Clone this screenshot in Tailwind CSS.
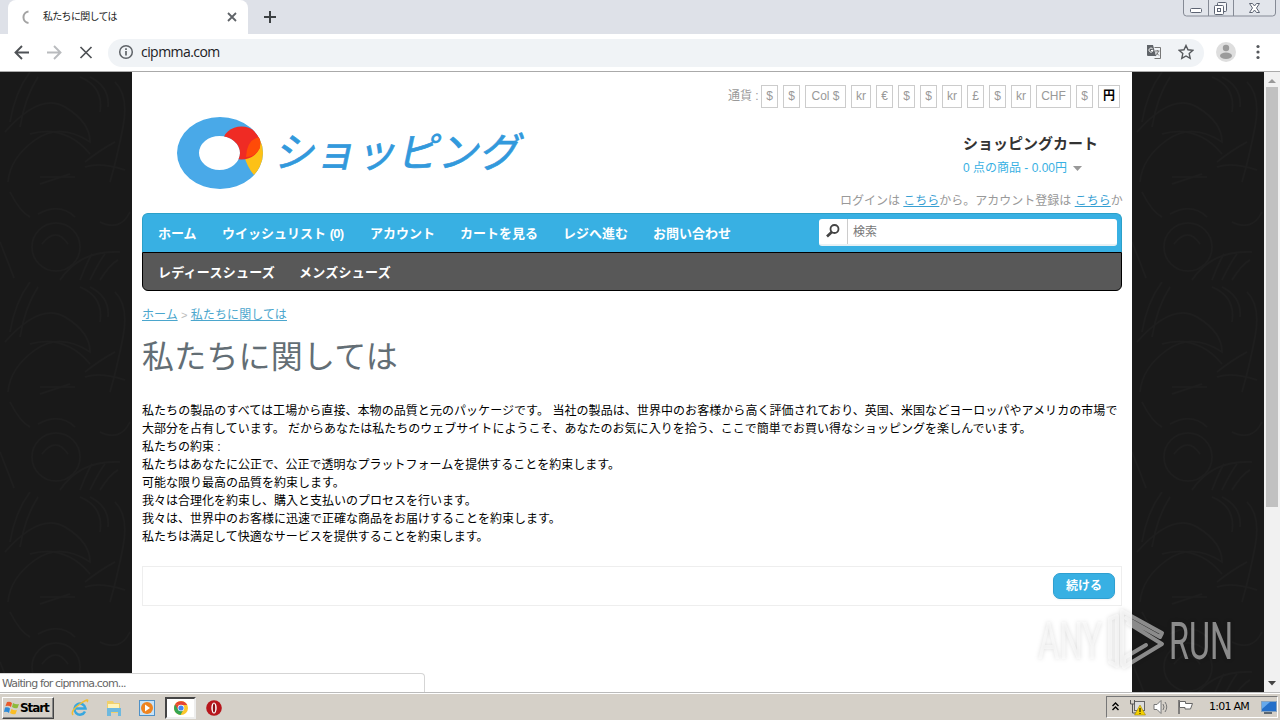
<!DOCTYPE html>
<html lang="ja">
<head>
  <meta charset="UTF-8" />
  <meta name="viewport" content="width=device-width, initial-scale=1.0"/>
  <title>私たちに関しては</title>
  <script src="https://cdn.jsdelivr.net/npm/@tailwindcss/browser@4"></script>
</head>
<body class="relative w-[1280px] h-[720px] overflow-hidden flex flex-col bg-white text-xs whitespace-nowrap font-['Liberation_Sans','Noto_Sans_CJK_JP',sans-serif]">

  <!-- Tab strip -->
  <div class="h-[34px] shrink-0 bg-[#dee1e8] flex justify-between">
    <div class="flex pl-2">
      <div class="w-60 h-[34px] bg-white rounded-t-lg flex items-center pl-[11px] pr-[10px]">
        <svg class="w-4 h-4 mr-2" viewBox="0 0 16 16" fill="none" stroke="#a3a3a3" stroke-width="2"><path d="M9.500 2.500A5.800 5.800 0 0 0 9.500 14"/></svg>
        <span class="text-[10px] w-[75px] text-[#222] tracking-[-0.7px]">私たちに関しては</span>
        <svg class="w-3 h-3 ml-auto" viewBox="0 0 12 12" stroke="#5f6368" stroke-width="1.8"><path d="M2 2l8 8M10 2l-8 8"/></svg>
      </div>
      <svg class="w-3 h-3 ml-4 mt-[11px]" viewBox="0 0 12 12" stroke="#3c4043" stroke-width="2"><path d="M6 0v12M0 6h12"/></svg>
    </div>
    <!-- Window buttons -->
    <svg class="w-24 h-[18px] mr-[1px]" viewBox="0 0 96 18" fill="none" stroke="#858a95">
      <path d="M.5 0v13q0 3 3 3h86q3 0 3-3V0M25.500 0v16M50.500 0v16" fill="#e2e5eb"/>
      <g stroke="#5d6473">
        <rect x="7.500" y="8.500" width="11" height="4" rx="1" fill="#fff"/>
        <rect x="34.500" y="2.500" width="9" height="9" rx="1" fill="#f5f6f8"/>
        <rect x="31.500" y="5.500" width="9" height="9" rx="1" fill="#fff"/>
        <rect x="34.500" y="8.500" width="3" height="3"/>
        <path d="M66.500 3.500h3l2 2.500 2-2.500h3l-3 4.500 3 4.500h-3l-2-2.500-2 2.500h-3l3-4.500z" fill="#fff"/>
      </g>
    </svg>
  </div>

  <!-- Toolbar -->
  <div class="h-[38px] shrink-0 bg-white border-b border-[#aaa] flex items-center pl-[14px] pr-[14px]">
    <svg class="w-4 h-4 mr-4" viewBox="0 0 16 16" fill="none" stroke="#4f5256" stroke-width="1.900"><path d="M15 7.500H2M8 1L1.500 7.500 8 14"/></svg>
    <svg class="w-4 h-4 mr-4" viewBox="0 0 16 16" fill="none" stroke="#b9bbbe" stroke-width="1.900"><path d="M1 7.500h13M8 1L14.500 7.500 8 14"/></svg>
    <svg class="w-4 h-4 mr-[14px]" viewBox="0 0 16 16" stroke="#4f5256" stroke-width="1.700"><path d="M2.500 2l11 11M13.500 2l-11 11"/></svg>
    <div class="w-[1096px] h-7 rounded-full bg-[#f0f3f6] flex items-center px-[10px]">
      <svg class="w-4 h-4 mr-[7px] -mt-px" viewBox="0 0 16 16" fill="none" stroke="#5f6368" stroke-width="1.500"><circle cx="8" cy="8" r="6.300"/><path d="M8 7v4.500M8 4.300v1.700" stroke-width="1.700"/></svg>
      <span class="text-sm text-[#202124] font-['Open_Sans',sans-serif] w-[79px] tracking-[-0.56px] -mt-px">cipmma.com</span>
      <svg class="w-4 h-4 ml-auto mr-4 -mt-[2px]" viewBox="0 0 16 16" fill="none">
        <path d="M8.500 3.500h6v11h-6" stroke="#777"/><path d="M9 7h4.500M11.300 6v1M12.500 7q-1 4-3.500 5M10 8.500l3 3" stroke="#777"/>
        <path d="M1 1h6l3 11H2q-1 0-1-1z" fill="#5f6368"/><path d="M6.700 5A2 2 0 1 0 7 6.500H5" stroke="#fff"/>
      </svg>
      <svg class="w-4 h-4 -mt-[2px]" viewBox="0 0 16 16" fill="none" stroke="#55585c" stroke-width="1.400"><path d="M8 1.500l2 4.300 4.700.6-3.500 3.200 1 4.700L8 12l-4.200 2.300 1-4.700L1.300 6.400 6 5.800z"/></svg>
    </div>
    <svg class="w-5 h-5 ml-3 -mt-[2px]" viewBox="0 0 20 20"><circle cx="10" cy="10" r="10" fill="#dedede"/><circle cx="10" cy="6" r="3.200" fill="#9b9b9b"/><ellipse cx="10" cy="13.700" rx="6" ry="3.200" fill="#9b9b9b"/></svg>
    <svg class="w-4 h-4 ml-[14px] -mt-px" viewBox="0 0 16 16" fill="#55585c"><circle cx="8" cy="2.500" r="1.600"/><circle cx="8" cy="8" r="1.600"/><circle cx="8" cy="13.500" r="1.600"/></svg>
  </div>

  <!-- Viewport -->
  <div class="h-[620px] shrink-0 flex relative">
    <svg class="w-[132px] h-full" fill="none">
      <defs>
        <pattern id="damask" width="132" height="210" patternUnits="userSpaceOnUse">
          <rect width="132" height="210" fill="#191919"/>
          <g stroke="#1e1e1e" stroke-width="1.500">
            <path d="M5 60Q40 20 65 35T90 70Q60 50 35 68T8 110M30 62q35-10 60 20M10 50q5-30 20-50M20 55q5-30 18-50M80 5q24 10 20 35M90 5q20 10 18 30"/>
            <path d="M38 142Q60 130 75 145M32 175a24 24 0 1 0 48 0a24 24 0 1 0-48 0M42 172q14-18 26 0M10 120q10 20 20 25M85 95q15-5 40 3M85 90q15-12 30-20M40 105h35M40 112l30-10"/>
            <path d="M60 208q20-30 60-28M80 208q8-20 12-26M90 208q10-20 15-26M100 208q10-16 18-20M115 10q14 14 8 45T110 110M0 170q8 20 14 36M100 150q20 10 30-10"/>
          </g>
        </pattern>
      </defs>
      <rect width="132" height="620" fill="url(#damask)"/>
    </svg>

    <div class="w-[1000px] px-[10px] bg-white">
      <!-- Header -->
      <div class="h-[141px] flex justify-between">
        <div class="flex pl-[35px] pt-[45px]">
          <svg class="w-[87px] h-[73px]" viewBox="0 0 87 73">
            <defs><clipPath id="ring"><path clip-rule="evenodd" d="M0 36a43 36 0 1 0 86 0a43 36 0 1 0-86 0M22 36a20.500 17 0 1 0 41 0a20.500 17 0 1 0-41 0"/></clipPath></defs>
            <g clip-path="url(#ring)">
              <rect width="87" height="73" fill="#49a9e8"/>
              <path d="M67 38Q70 50 77 58L90 50V20H80z" fill="#fdc116"/>
              <ellipse cx="64.500" cy="26" rx="19" ry="16.500" fill="#ef2b24"/>
              <path d="M83 20Q70 22 69 40Q78 40 83 31z" fill="#ff4b08"/>
            </g>
          </svg>
          <span class="text-[41px] leading-[60px] h-[60px] ml-[13px] mt-[2px] text-[#3299dc] [-webkit-text-stroke:0.7px_#3299dc] -skew-x-12 font-['Noto_Sans_CJK_JP',sans-serif]">ショッピング</span>
        </div>
        <div class="flex flex-col items-end pt-[13px] text-[#999]">
          <div class="flex items-center gap-[5px] pr-[2px] h-[23px] leading-[21px] text-center [&>b]:border [&>b]:border-[#ccc] [&>b]:h-[23px] [&>b]:font-normal">
            <span class="w-[29px] text-left -mr-[1px]">通貨 :</span>
            <b class="w-[17px]">$</b><b class="w-[17px]">$</b><b class="w-[41px]">Col $</b><b class="w-5">kr</b><b class="w-[17px]">€</b><b class="w-[17px]">$</b><b class="w-[17px]">$</b><b class="w-5">kr</b><b class="w-[17px]">£</b><b class="w-[17px]">$</b><b class="w-5">kr</b><b class="w-[35px]">CHF</b><b class="w-[17px]">$</b><b class="w-[22px] text-black"><strong>円</strong></b>
          </div>
          <div class="w-[159px] mt-[26px] h-5 leading-5 text-[15px] font-bold text-[#333]">ショッピングカート</div>
          <div class="w-[159px] mt-1 h-5 leading-5 text-[#38b0e3] flex items-center"><span class="w-[105px]">0 点の商品 - 0.00円</span>
            <svg class="w-[9px] h-[5px] ml-[5px]" viewBox="0 0 9 5" fill="#999"><path d="M0 0h9L4.500 5z"/></svg>
          </div>
          <div class="w-[282px] mt-[13px] h-5 leading-5">ログインは <a class="text-[#38a0d3] underline">こちら</a>から。アカウント登録は <a class="text-[#38a0d3] underline">こちら</a>か</div>
        </div>
      </div>

      <!-- Menus -->
      <div class="h-[39px] bg-[#38b0e3] border border-b-0 border-[#2ba0c8] rounded-t-md flex items-center justify-between pl-[15px] pr-1 text-[13px] font-bold text-white">
        <div class="flex gap-[25px] pt-[2px]">
          <span class="w-[39px]">ホーム</span>
          <span class="w-[123px]">ウイッシュリスト <span class="tracking-[-0.7px]">(0)</span></span>
          <span class="w-[65px]">アカウント</span>
          <span class="w-[78px]">カートを見る</span>
          <span class="w-[65px]">レジへ進む</span>
          <span class="w-[78px]">お問い合わせ</span>
        </div>
        <div class="w-[298px] h-[27px] -mt-[2px] bg-white rounded-[3px] flex items-center border-b-2 border-[#e8f1f5] text-xs font-normal text-[#777]">
          <div class="w-[29px] h-full border-r border-[#ccc] flex items-center justify-center">
            <svg class="w-[14px] h-[14px]" viewBox="0 0 14 14" fill="none" stroke="#444"><circle cx="8.500" cy="5" r="4" stroke-width="1.800"/><path d="M5.800 8L1 12.500" stroke-width="2.700"/></svg>
          </div>
          <span class="pl-[5px] pt-px">検索</span>
        </div>
      </div>
      <div class="h-[39px] bg-[#585858] border border-black rounded-b-md flex items-center gap-[24px] pl-[15px] pt-[2px] text-[13px] font-bold text-white tracking-[0.25px]">
        <span>レディースシューズ</span>
        <span>メンズシューズ</span>
      </div>

      <div class="mt-[15px] h-[18px] leading-[18px] text-[#bbb]"><a class="text-[#4ba6cd] underline">ホーム</a> <span class="text-[11px]">&gt;</span> <a class="text-[#4ba6cd] underline tracking-[0.1px]">私たちに関しては</a></div>
      <h1 class="mt-[10px] h-10 leading-10 text-[32px] text-[#636e75] tracking-[0.2px] font-['Noto_Sans_CJK_JP',sans-serif]">私たちに関しては</h1>

      <div class="mt-[28px] leading-[18px] h-36 text-black">
        <p class="tracking-[0.06px]">私たちの製品のすべては工場から直接、本物の品質と元のパッケージです。 当社の製品は、世界中のお客様から高く評価されており、英国、米国などヨーロッパやアメリカの市場で</p>
        <p class="tracking-[0.02px]">大部分を占有しています。 だからあなたは私たちのウェブサイトにようこそ、あなたのお気に入りを拾う、ここで簡単でお買い得なショッピングを楽しんでいます。</p>
        <p>私たちの約束 :</p>
        <p>私たちはあなたに公正で、公正で透明なプラットフォームを提供することを約束します。</p>
        <p>可能な限り最高の品質を約束します。</p>
        <p>我々は合理化を約束し、購入と支払いのプロセスを行います。</p>
        <p>我々は、世界中のお客様に迅速で正確な商品をお届けすることを約束します。</p>
        <p>私たちは満足して快適なサービスを提供することを約束します。</p>
      </div>

      <div class="mt-5 h-10 border border-[#eee] flex items-center justify-end pr-[6px]">
        <button class="w-[62px] h-[26px] rounded-[7px] bg-[#38b0e3] border border-[#2f9fd0] font-bold text-white shadow-xs">続ける</button>
      </div>
    </div>

    <svg class="w-[132px] h-full"><rect width="132" height="620" fill="url(#damask)"/></svg>

    <!-- Scrollbar -->
    <div class="w-4 bg-[#f1f1f1] flex flex-col items-center">
      <svg class="w-2 h-[15px] shrink-0" viewBox="0 0 8 15" fill="#999"><path d="M0 11l4-4 4 4z"/></svg>
      <div class="w-3 h-[420px] bg-[#c1c1c1]"></div>
      <svg class="w-2 h-[5px] mt-auto mb-[6px]" viewBox="0 0 8 5" fill="#444"><path d="M0 0h8L4 4.500z"/></svg>
    </div>

    <!-- Status bubble -->
    <div class="absolute left-0 bottom-0 w-[425px] h-[19px] leading-[19px] bg-white border-t border-r border-[#d5d5d5] rounded-tr pl-[2px] text-[11px] text-[#666] font-['DejaVu_Sans',sans-serif]"><span class="tracking-[-0.86px]">Waiting for cipmma.com...</span></div>
  </div>

  <!-- Taskbar -->
  <div class="h-7 shrink-0 bg-[#d5d0c8] border-t border-[#bbb] shadow-[inset_0_1px_#fff] flex items-center">
    <div class="w-[52px] h-[22px] ml-[2px] mt-[2px] border border-t-white border-l-white border-r-[#444] border-b-[#444] shadow-[inset_-1px_-1px_#888] flex items-center pl-px text-[11px] font-bold text-black font-['DejaVu_Sans',sans-serif]">
      <svg class="w-4 h-4 shrink-0" viewBox="0 0 16 16"><path d="M3 2q3-1 5 1L7 7Q5 5 1.500 6z" fill="#e9592a"/><path d="M9 3q3 2 6 1l-1.500 4Q11 9 8 7z" fill="#8dba3a"/><path d="M1 7.500q3-1 5 1L5 13q-2-2-5-1z" fill="#2d8bd8"/><path d="M7.500 9q3 2 5.500 1l-1.500 4Q9 15 6 13z" fill="#fbbd24"/></svg>
      <span class="text-xs tracking-[-1.1px]">Start</span>
    </div>
    <svg class="w-[18px] h-[18px] ml-[17px] mt-[2px]" viewBox="0 0 18 18" fill="none"><path d="M14 12.500A5.500 5.500 0 1 1 14.500 9.500H5" stroke="#38a7df" stroke-width="2.500"/><path d="M2 16Q-1 12 9 5T16 3" stroke="#f2bd32" stroke-width="1.500"/></svg>
    <svg class="w-[18px] h-[18px] ml-4 mt-[2px]" viewBox="0 0 18 18"><path d="M2 2h6l1 2h6v10H2z" fill="#f0d06b"/><path d="M3 5h11v4H3z" fill="#fff4b9"/><path d="M2 9h14v8h-3v-4H6v4H2z" fill="#6eb9df"/></svg>
    <svg class="w-4 h-4 ml-4 mt-[2px]" viewBox="0 0 16 16"><rect x=".5" y=".5" width="15" height="15" fill="#c7e3f8" stroke="#4f91c7"/><circle cx="8" cy="8" r="6" fill="#ef8420"/><path d="M6 4.500v7l5-3.500z" fill="#fff"/></svg>
    <div class="w-[31px] h-[22px] ml-[10px] mt-[2px] bg-white border-2 border-t-[#444] border-l-[#444] border-[#eee] flex items-center justify-center">
      <svg class="w-[14px] h-[14px]" viewBox="0 0 14 14"><circle cx="7" cy="7" r="7" fill="#fbc62c"/><path d="M1 3.500A7 7 0 0 0 6.500 14L9.500 8.500 7 7z" fill="#34a552"/><path d="M1 3.500A7 7 0 0 1 13.200 4H7z" fill="#e64335"/><path d="M1 3.500L4 8.500 7 4z" fill="#e64335"/><circle cx="7" cy="7" r="3.300" fill="#fff"/><circle cx="7" cy="7" r="2.600" fill="#4285f4"/></svg>
    </div>
    <svg class="w-4 h-4 ml-[10px] mt-[2px]" viewBox="0 0 16 16"><circle cx="8" cy="8" r="7.800" fill="#b7161c"/><ellipse cx="8" cy="8" rx="2.700" ry="5.500" fill="#fff"/><ellipse cx="8" cy="8" rx="1.200" ry="4.500" fill="#8c1015"/></svg>

    <!-- Tray -->
    <div class="ml-auto mr-[2px] mt-[1px] w-[172px] h-[22px] border border-t-[#777] border-l-[#777] border-white flex items-center">
      <svg class="w-[7px] h-[9px] ml-[5px] -mt-[2px]" viewBox="0 0 7 9" fill="none" stroke="#000" stroke-width="1.400"><path d="M.5 4l3-3 3 3M.5 8l3-3 3 3"/></svg>
      <svg class="w-[17px] h-[17px] ml-[10px]" viewBox="0 0 17 17"><rect x="5.500" y="2.500" width="10" height="9" fill="#ddd" stroke="#666"/><path d="M1.500 1v4h4V1M3.500 5v9h6" fill="none" stroke="#555"/><path d="M11 6l5.500 10h-11z" fill="#f4d000" stroke="#927b00" stroke-width=".5"/><path d="M11 9v4M11 14v1" stroke="#000"/></svg>
      <svg class="w-4 h-4 ml-[7px]" viewBox="0 0 16 16" stroke="#777"><path d="M1 5.500h3l4-4v13l-4-4H1z" fill="#fff"/><path d="M10 5q2 3 0 6M12 3q3.500 5 0 10" fill="none"/></svg>
      <svg class="w-4 h-4 ml-2" viewBox="0 0 16 16" stroke="#666"><path d="M2 1v14" stroke-width="1.500"/><path d="M2.500 2.500h6v2h7l-2 5.500H8V8.500H2.500z" fill="#fff"/></svg>
      <span class="ml-[16px] w-[42px] text-[11px] text-black font-['DejaVu_Sans',sans-serif] tracking-[-0.75px]">1:01 AM</span>
      <svg class="w-4 h-[14px] ml-[10px]" viewBox="0 0 16 14"><rect x=".5" y="1.500" width="15" height="10" fill="#246fc9" stroke="#87a3bf"/><path d="M1 2h8L1 9z" fill="#66a9ec"/><path d="M3 13h8" stroke="#345" stroke-width="1.500"/></svg>
    </div>
  </div>

  <!-- Watermark -->
  <svg class="absolute left-[1034px] top-[604px] w-[212px] h-[74px] drop-shadow-[0_0_2px_#0004]" viewBox="0 0 212 74" font-family="Roboto, sans-serif" font-size="52" fill="#fff" fill-opacity=".5">
    <text x="4" y="55" textLength="64" lengthAdjust="spacingAndGlyphs">ANY</text>
    <text x="135" y="55" textLength="64" lengthAdjust="spacingAndGlyphs">RUN</text>
    <g fill="none" stroke="#fff" stroke-opacity=".5" stroke-width="4" stroke-linejoin="round" stroke-linecap="round"><path d="M88 60V7l40 22-2 4-34-19M94 19l34 21-38 23v-9l22-13M76 54V15l7-3v50l-7-4"/></g>
  </svg>
</body>
</html>
